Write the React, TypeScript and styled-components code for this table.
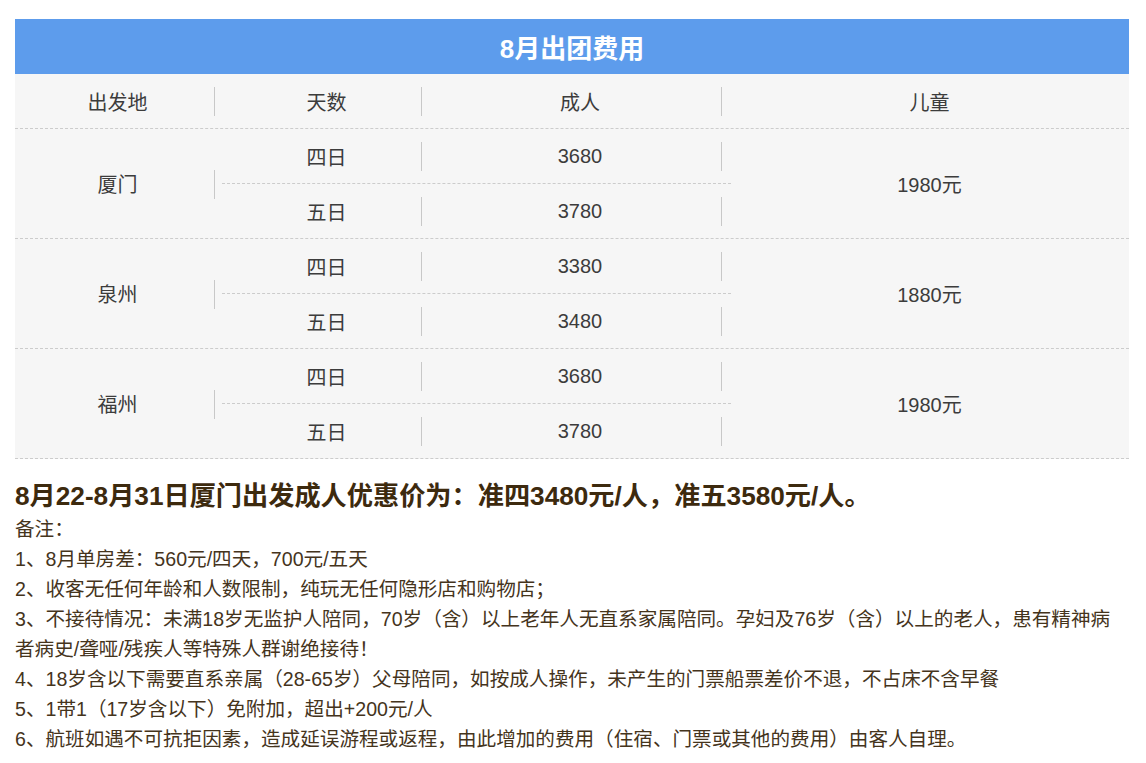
import React from "react";
import styled, { createGlobalStyle } from "styled-components";

const GlobalStyle = createGlobalStyle`
  html, body { margin: 0; padding: 0; background: #ffffff; }
  body {
    font-family: "Liberation Sans", "Noto Sans CJK SC", sans-serif;
    color: #333333;
  }
`;

const Page = styled.div`
  padding: 19px 15px 20px 15px;
  width: 1116px;
`;

const Table = styled.div`
  width: 1114px;
  display: flex;
  flex-direction: column;
  background: #f6f6f6;
`;

const TitleBar = styled.div`
  height: 55px;
  background: #5d9cec;
  color: #ffffff;
  font-size: 26px;
  font-weight: 700;
  display: flex;
  align-items: center;
  justify-content: center;
`;

const HeaderRow = styled.div`
  display: grid;
  grid-template-columns: 200px 207px 300px 1fr;
  height: 54px;
  border-bottom: 1px dashed #cccccc;
`;

const Cell = styled.div<{ $sep?: boolean; $pad?: number }>`
  position: relative;
  display: flex;
  align-items: center;
  justify-content: center;
  padding-left: ${(p) => p.$pad ?? 0}px;
  font-size: 20px;
  color: #3c3c3c;
  ${(p) =>
    p.$sep &&
    `
    &::after {
      content: "";
      position: absolute;
      right: 0;
      top: 50%;
      height: 29px;
      margin-top: -14px;
      width: 1px;
      background: #c8c8c8;
    }
  `}
`;

const GroupRow = styled.div`
  display: grid;
  grid-template-columns: 200px 507px 1fr;
  height: 109px;
  border-bottom: 1px dashed #cccccc;
`;

const SubTable = styled.div`
  display: flex;
  flex-direction: column;
`;

const SubRow = styled.div`
  display: grid;
  grid-template-columns: 207px 300px;
  flex: 1;
`;

const SubDivider = styled.div`
  height: 0;
  border-top: 1px dashed #cccccc;
  margin: 0 -9px 0 7px;
`;

const Notes = styled.div`
  width: 1110px;
  color: #45341c;
  font-size: 19.6px;
  line-height: 30px;
`;

const Promo = styled.div`
  margin-top: 19px;
  font-size: 26.2px;
  line-height: 36px;
  font-weight: 700;
  color: #3d2a0e;
`;

const NoteLine = styled.div``;

const groups = [
  { city: "厦门", rows: [["四日", "3680"], ["五日", "3780"]], child: "1980元" },
  { city: "泉州", rows: [["四日", "3380"], ["五日", "3480"]], child: "1880元" },
  { city: "福州", rows: [["四日", "3680"], ["五日", "3780"]], child: "1980元" },
];

const notes = [
  "备注：",
  "1、8月单房差：560元/四天，700元/五天",
  "2、收客无任何年龄和人数限制，纯玩无任何隐形店和购物店；",
  "3、不接待情况：未满18岁无监护人陪同，70岁（含）以上老年人无直系家属陪同。孕妇及76岁（含）以上的老人，患有精神病者病史/聋哑/残疾人等特殊人群谢绝接待！",
  "4、18岁含以下需要直系亲属（28-65岁）父母陪同，如按成人操作，未产生的门票船票差价不退，不占床不含早餐",
  "5、1带1（17岁含以下）免附加，超出+200元/人",
  "6、航班如遇不可抗拒因素，造成延误游程或返程，由此增加的费用（住宿、门票或其他的费用）由客人自理。",
];

export default function App() {
  return (
    <>
      <GlobalStyle />
      <Page>
        <Table>
          <TitleBar>8月出团费用</TitleBar>
          <HeaderRow>
            <Cell $sep $pad={5}>出发地</Cell>
            <Cell $sep $pad={16}>天数</Cell>
            <Cell $sep $pad={16}>成人</Cell>
            <Cell $pad={8}>儿童</Cell>
          </HeaderRow>
          {groups.map((g) => (
            <GroupRow key={g.city}>
              <Cell $sep $pad={5}>{g.city}</Cell>
              <SubTable>
                <SubRow>
                  <Cell $sep $pad={16}>{g.rows[0][0]}</Cell>
                  <Cell $sep $pad={16}>{g.rows[0][1]}</Cell>
                </SubRow>
                <SubDivider />
                <SubRow>
                  <Cell $sep $pad={16}>{g.rows[1][0]}</Cell>
                  <Cell $sep $pad={16}>{g.rows[1][1]}</Cell>
                </SubRow>
              </SubTable>
              <Cell $pad={8}>{g.child}</Cell>
            </GroupRow>
          ))}
        </Table>
        <Promo>8月22-8月31日厦门出发成人优惠价为：准四3480元/人，准五3580元/人。</Promo>
        <Notes>
          {notes.map((n) => (
            <NoteLine key={n}>{n}</NoteLine>
          ))}
        </Notes>
      </Page>
    </>
  );
}
